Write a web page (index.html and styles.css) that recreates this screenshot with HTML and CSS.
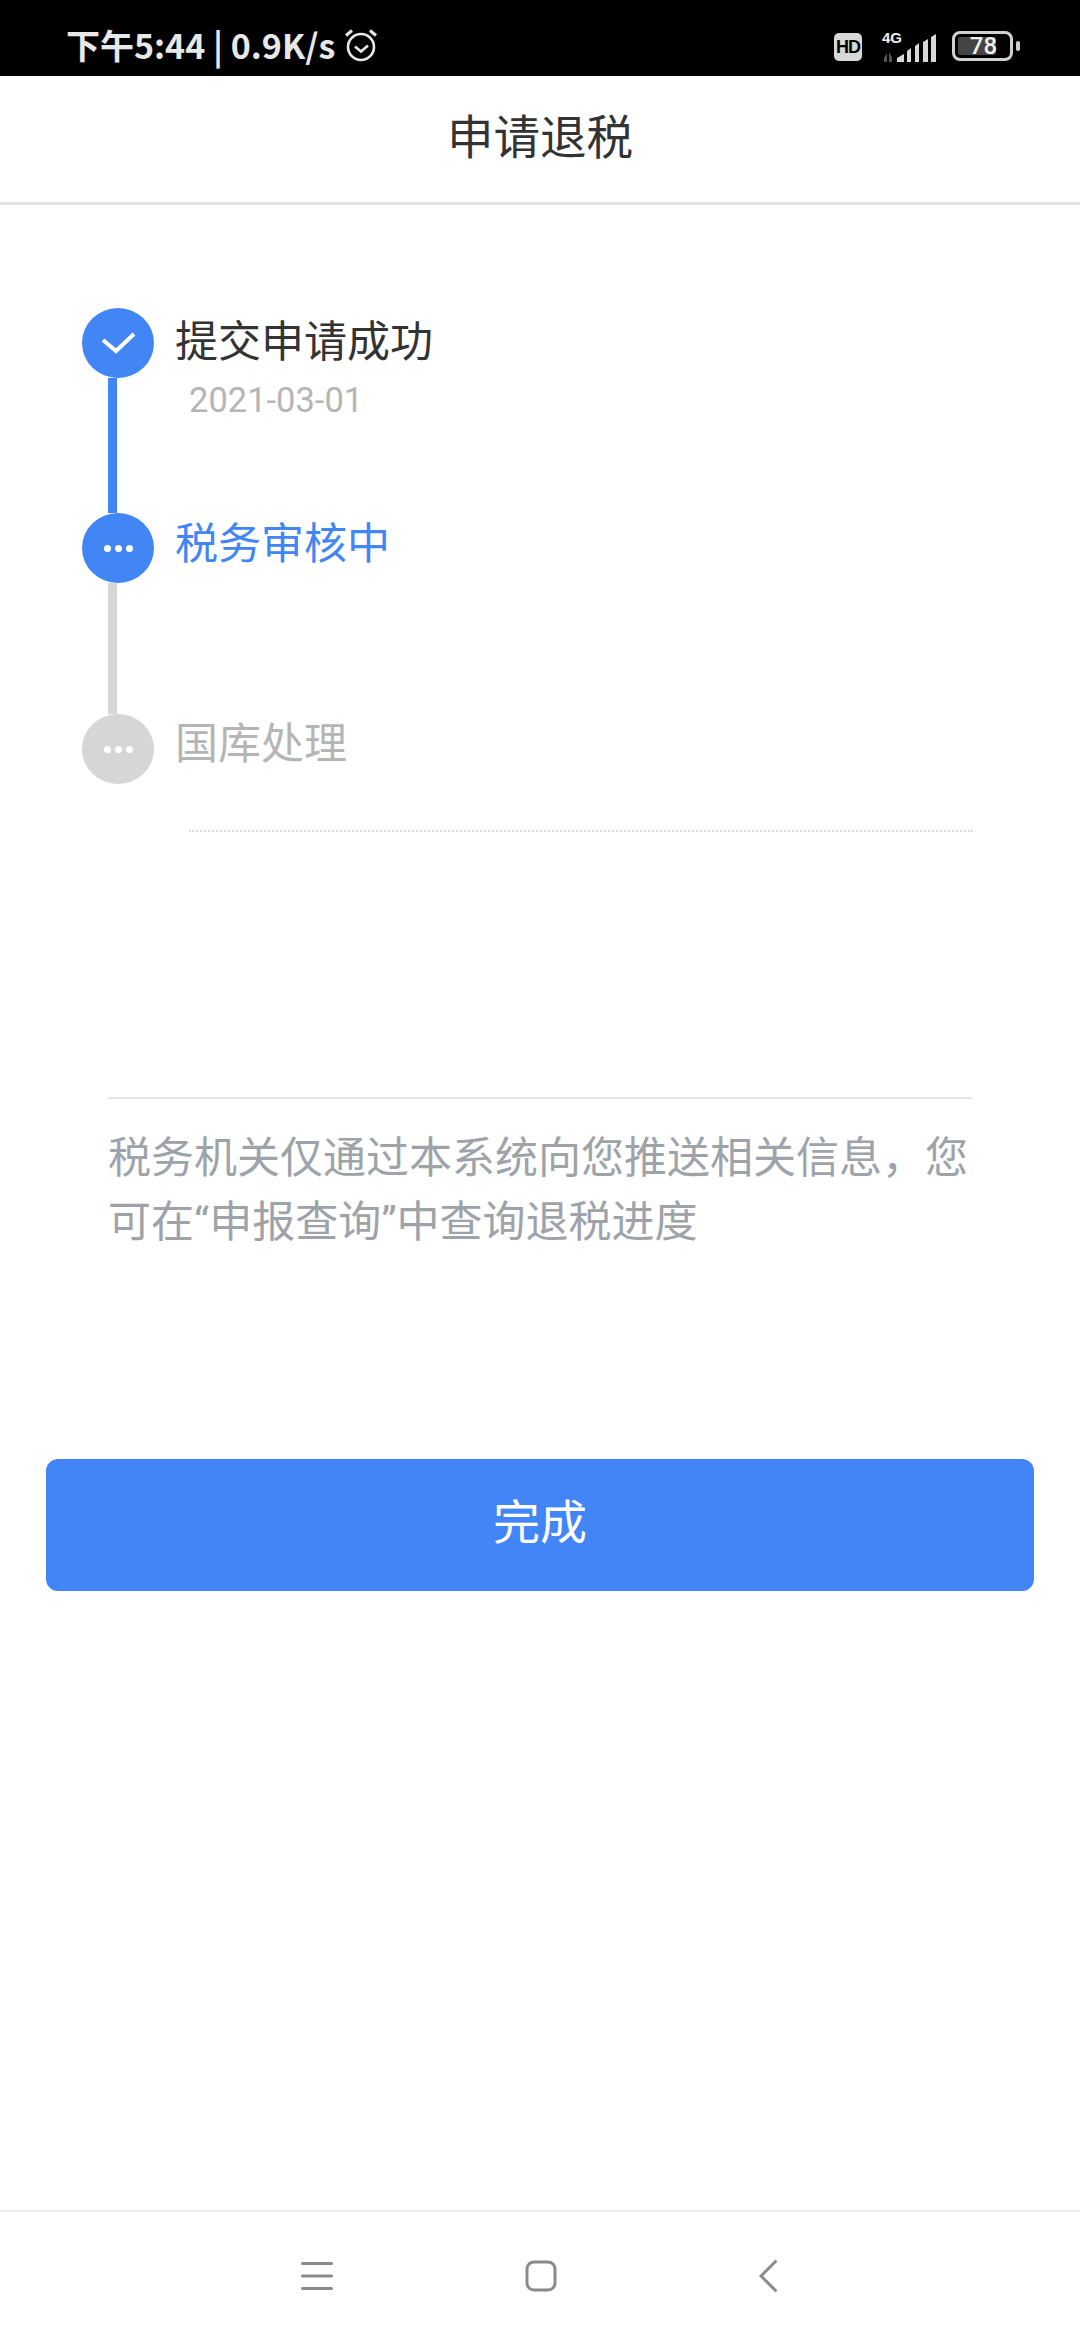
FILE: index.html
```html
<!DOCTYPE html>
<html>
<head>
    <title>申请退税</title>
    <link rel="stylesheet" href="styles.css">
</head>
<body>
    <div class="status-bar">
        <div class="status-left">
            <span class="status-time">下午5:44 | 0.9K/s</span>
            <svg class="alarm" width="34" height="34" viewBox="0 0 34 34" fill="none" stroke="#e8e8e8">
                <circle cx="17" cy="19" r="13" stroke-width="2.6"/>
                <path d="M11 18.500l6 5 7-6" stroke-width="2.6"/>
                <path d="M2 7.500L8 2.500M32 7.500L26 2.500" stroke-width="3"/>
            </svg>
        </div>
        <div class="status-right">
            <span class="hd">HD</span>
            <div class="signal">
                <span class="net">4G</span>
                <svg width="56" height="32" viewBox="0 0 56 32" fill="#d8d8d8">
                    <path d="M4 32v-4l3-5v9zM9 32V22l3 5v5z" fill="#555"/>
                    <path d="M17 32v-4l7-4v8zM27 32V21l4-3v14zM35 32V16l4-3v19zM43 32V12l5-3v23zM51 32V7l5-3v28z"/>
                </svg>
            </div>
            <div class="battery"><span class="battery-fill"></span><span class="battery-num">78</span></div>
            <span class="battery-tip"></span>
        </div>
    </div>

    <div class="title-bar">申请退税</div>

    <div class="timeline">
        <div class="step step-first">
            <div class="marker">
                <div class="dot done">
                    <svg width="36" height="28" viewBox="0 0 36 28" fill="none" stroke="#fff" stroke-width="4">
                        <path d="M3 11l13 11L34 5"/>
                    </svg>
                </div>
                <div class="line"></div>
            </div>
            <div class="step-body">
                <div class="step-name">提交申请成功</div>
                <div class="step-date">2021-03-01</div>
            </div>
        </div>
        <div class="step step-second">
            <div class="marker">
                <div class="dot current"><i></i><i></i><i></i></div>
                <div class="line line-grey"></div>
            </div>
            <div class="step-body">
                <div class="step-name blue">税务审核中</div>
            </div>
        </div>
        <div class="step step-last">
            <div class="marker">
                <div class="dot waiting"><i></i><i></i><i></i></div>
            </div>
            <div class="step-body">
                <div class="step-name grey">国库处理</div>
            </div>
        </div>
    </div>
    <div class="dotted"></div>

    <div class="notice">税务机关仅通过本系统向您推送相关信息，您可在“申报查询”中查询退税进度</div>

    <button class="finish">完成</button>

    <div class="nav-bar">
        <svg class="nav-menu" width="32" height="32" viewBox="0 0 32 32" fill="none" stroke="#8a8a8a" stroke-width="3" stroke-linecap="round">
            <path d="M1.500 3.500h29M1.500 16h29M1.500 28.500h29"/>
        </svg>
        <svg class="nav-home" width="32" height="32" viewBox="0 0 32 32" fill="none" stroke="#8a8a8a" stroke-width="3">
            <rect x="2" y="2" width="28" height="28" rx="7"/>
        </svg>
        <svg width="18" height="32" viewBox="0 0 18 32" fill="none" stroke="#8a8a8a" stroke-width="3" stroke-linecap="round">
            <path d="M16.500 1.500L2 16l14.500 14.500"/>
        </svg>
    </div>
</body>
</html>
```

FILE: styles.css
```css
* {
    box-sizing: border-box;
}
html, body {
    margin: 0;
    padding: 0;
}
body {
    width: 1080px;
    height: 2340px;
    background: #fff;
    font-family: "Noto Sans CJK SC", "Noto Sans", sans-serif;
    display: flex;
    flex-direction: column;
    overflow: hidden;
}
.status-bar {
    height: 76px;
    background: #000;
    color: #e8e8e8;
    display: flex;
    justify-content: space-between;
    align-items: center;
    padding: 14px 60px 0 66px;
    flex-shrink: 0;
}
.status-left {
    display: flex;
    align-items: center;
    gap: 9px;
}
.status-time {
    font-size: 34px;
    font-weight: 700;
    line-height: 48px;
    white-space: nowrap;
}
.status-right {
    display: flex;
    align-items: center;
}
.hd {
    width: 28px;
    height: 28px;
    margin-top: 4px;
    background: #d8d8d8;
    color: #000;
    border-radius: 5px;
    font: bold 18px/28px "Liberation Sans", sans-serif;
    letter-spacing: -1px;
    text-align: center;
}
.signal {
    width: 56px;
    height: 32px;
    margin-left: 18px;
    margin-top: 2px;
    position: relative;
}
.signal svg {
    display: block;
}
.net {
    position: absolute;
    left: 2px;
    top: 2px;
    font: bold 15px/12px "Liberation Sans", sans-serif;
    color: #f0f0f0;
}
.battery {
    width: 61px;
    height: 30px;
    margin-left: 16px;
    margin-top: 2px;
    border: 3px solid #d0d0d0;
    border-radius: 8px;
    padding: 3px;
    position: relative;
}
.battery-fill {
    display: block;
    width: 78%;
    height: 100%;
    background: #444;
    border-radius: 2px;
}
.battery-num {
    position: absolute;
    left: 2px;
    right: 0;
    top: 0;
    text-align: center;
    font: 500 24px/24px Roboto, sans-serif;
    color: #f0f0f0;
}
.battery-tip {
    width: 4px;
    height: 10px;
    margin-left: 3px;
    margin-top: 2px;
    background: #d0d0d0;
    border-radius: 2px;
}
.title-bar {
    height: 129px;
    padding-bottom: 12px;
    border-bottom: 3px solid #e2e2e2;
    display: flex;
    align-items: center;
    justify-content: center;
    font-size: 46.5px;
    color: #333;
    flex-shrink: 0;
}
.timeline {
    margin: 103px 0 0 82px;
}
.step {
    display: flex;
    gap: 21px;
}
.step-first {
    height: 205px;
}
.step-second {
    height: 201px;
}
.step-last {
    height: 70px;
}
.marker {
    width: 72px;
    display: flex;
    flex-direction: column;
}
.dot {
    width: 72px;
    height: 70px;
    border-radius: 50%;
    display: flex;
    align-items: center;
    justify-content: center;
    gap: 4px;
    flex-shrink: 0;
}
.dot i {
    width: 7px;
    height: 7px;
    border-radius: 50%;
    background: #fff;
}
.done, .current {
    background: #4285f4;
}
.waiting {
    background: #d6d6d6;
}
.line {
    width: 9px;
    margin-left: 26px;
    flex: 1;
    background: #4285f4;
}
.line-grey {
    background: #d6d6d6;
}
.step-name {
    font-size: 43px;
    line-height: 60px;
    color: #333;
}
.step-second .step-name {
    margin-top: -3px;
}
.step-last .step-name {
    margin-top: -4px;
}
.step-name.blue {
    color: #4285f4;
}
.step-name.grey {
    color: #b5b5b5;
}
.step-date {
    font: 34.5px/40px Roboto, sans-serif;
    color: #b5b5b5;
    margin: 12px 0 0 14px;
}
.dotted {
    margin: 46px 107px 0 189px;
    border-top: 2px dotted #dcdcdc;
}
.notice {
    margin: 265px 108px 0;
    padding-top: 27px;
    border-top: 2px solid #e4e4e4;
    font-family: Roboto, "Noto Sans CJK SC", sans-serif;
    font-size: 43px;
    line-height: 64px;
    color: #9ea3a9;
}
.finish {
    display: block;
    margin: 205px 46px 0;
    height: 132px;
    padding-bottom: 14px;
    border: none;
    border-radius: 12px;
    background: #4285f6;
    color: #fff;
    font-family: inherit;
    font-size: 47px;
}
.nav-bar {
    margin-top: auto;
    height: 130px;
    border-top: 2px solid #ededed;
    display: flex;
    align-items: center;
    padding-left: 301px;
    flex-shrink: 0;
}
.nav-menu {
    margin-right: 192px;
}
.nav-home {
    margin-right: 202px;
}
```
